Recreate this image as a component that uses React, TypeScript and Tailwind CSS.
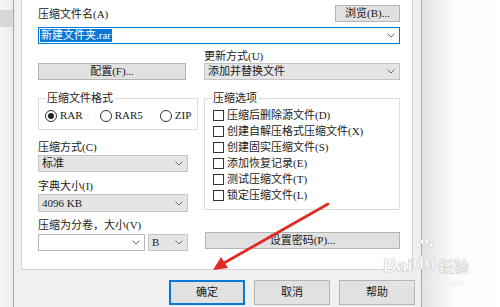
import React from "react";

const FONT = '"Liberation Serif", "Noto Sans CJK SC", serif';

function Chevron() {
  return (
    <svg width="8" height="5" viewBox="0 0 8 5" className="shrink-0">
      <polyline points="0.5,0.5 4,4 7.5,0.5" fill="none" stroke="#6a6a6a" strokeWidth="1" />
    </svg>
  );
}

function Combo({ text, className = "" }: { text: string; className?: string }) {
  return (
    <div
      className={`h-[17px] flex items-center justify-between bg-[#e5e5e5] border border-[#c4c4c4] pl-[3px] pr-[4px] text-[11px] leading-[13px] text-[#1a1a1a] ${className}`}
    >
      <span>{text}</span>
      <Chevron />
    </div>
  );
}

function Btn({ text, className = "" }: { text: string; className?: string }) {
  return (
    <div
      className={`h-[17px] flex items-center justify-center bg-[#e1e1e1] border border-[#b4b4b4] text-[11px] leading-[13px] text-[#1a1a1a] ${className}`}
    >
      {text}
    </div>
  );
}

function Radio({ label, checked }: { label: string; checked?: boolean }) {
  return (
    <div className="flex items-center gap-[3px]">
      <div className="w-[12px] h-[12px] rounded-full border border-[#333] bg-white flex items-center justify-center">
        {checked && <div className="w-[6px] h-[6px] rounded-full bg-[#222]" />}
      </div>
      <span>{label}</span>
    </div>
  );
}

function Check({ label }: { label: string }) {
  return (
    <div className="h-[16px] flex items-center gap-[3px]">
      <div className="w-[11px] h-[11px] border border-[#333] bg-white" />
      <span>{label}</span>
    </div>
  );
}

export default function App() {
  return (
    <div
      className="w-[500px] h-[307px] flex overflow-hidden relative bg-white text-[#1a1a1a]"
      style={{ fontFamily: FONT }}
    >
      {/* left strip */}
      <div className="w-[13px] flex flex-col bg-linear-to-r from-[#f8f8f8] to-[#ececec]">
        <div className="h-[10px]" />
        <div className="h-[17px] bg-[#d8d8d8]" />
      </div>

      {/* window */}
      <div className="w-[409px] flex flex-col bg-[#f0f0f0] border-l border-r border-[#a6a6a6]">
        {/* white tab panel */}
        <div className="ml-[7px] w-[392px] h-[270px] bg-white border-l border-r border-b border-[#d4d4d4] pl-[16px] pr-[12px] pt-[5px] text-[11px] leading-[13px]">
          {/* row 1 */}
          <div className="h-[17px] flex items-end justify-between">
            <span className="pb-[1px]">压缩文件名(A)</span>
            <Btn text="浏览(B)..." className="w-[65px]" />
          </div>
          <div className="mt-[5px] h-[17px] flex items-center justify-between border border-[#0078d7] bg-white pl-[1px] pr-[4px]">
            <span className="bg-[#0a78d7] text-white px-[1px] h-[13px] flex items-center">新建文件夹.rar</span>
            <Chevron />
          </div>

          {/* row 2 */}
          <div className="mt-[6px] grid grid-cols-[150px_1fr] gap-x-[16px]">
            <div className="flex items-end">
              <Btn text="配置(F)..." className="w-[148px]" />
            </div>
            <div className="flex flex-col">
              <span className="h-[13px]">更新方式(U)</span>
              <Combo text="添加并替换文件" className="mt-[0px]" />
            </div>
          </div>

          {/* row 3 */}
          <div className="mt-[12px] grid grid-cols-[150px_1fr] gap-x-[16px]">
            {/* left column */}
            <div className="flex flex-col">
              <fieldset className="border border-[#dcdcdc] h-[38px] px-[6px]">
                <legend className="ml-[1px] px-[1px] leading-[13px]">压缩文件格式</legend>
                <div className="mt-[4px] flex items-center gap-[17px]">
                  <Radio label="RAR" checked />
                  <Radio label="RAR5" />
                  <Radio label="ZIP" />
                </div>
              </fieldset>
              <span className="mt-[11px] h-[13px]">压缩方式(C)</span>
              <Combo text="标准" className="mt-[1px]" />
              <span className="mt-[8px] h-[13px]">字典大小(I)</span>
              <Combo text="4096 KB" className="mt-[1px] h-[18px]" />
              <span className="mt-[7px] h-[13px]">压缩为分卷，大小(V)</span>
              <div className="mt-[2px] flex gap-[3px]">
                <div className="w-[107px] h-[17px] flex items-center justify-end border border-[#b8b8b8] bg-white pr-[4px]">
                  <Chevron />
                </div>
                <Combo text="B" className="flex-1" />
              </div>
            </div>

            {/* right column */}
            <div className="flex flex-col">
              <fieldset className="border border-[#dcdcdc] h-[118px] pl-[8px]">
                <legend className="ml-[-1px] px-[1px] leading-[13px]">压缩选项</legend>
                <div className="mt-[2px] flex flex-col">
                  <Check label="压缩后删除源文件(D)" />
                  <Check label="创建自解压格式压缩文件(X)" />
                  <Check label="创建固实压缩文件(S)" />
                  <Check label="添加恢复记录(E)" />
                  <Check label="测试压缩文件(T)" />
                  <Check label="锁定压缩文件(L)" />
                </div>
              </fieldset>
              <Btn text="设置密码(P)..." className="mt-[22px] ml-[1px]" />
            </div>
          </div>
        </div>

        {/* bottom buttons */}
        <div className="mt-[10px] flex justify-end gap-[9px] pr-[6px] text-[11px] leading-[13px]">
          <div className="w-[76px] h-[25px] flex items-center justify-center bg-[#e1e1e1] border-2 border-[#0a78d7]">确定</div>
          <div className="w-[76px] h-[25px] flex items-center justify-center bg-[#e1e1e1] border border-[#b4b4b4]">取消</div>
          <div className="w-[76px] h-[25px] flex items-center justify-center bg-[#e1e1e1] border border-[#b4b4b4]">帮助</div>
        </div>
      </div>

      {/* outside */}
      <div className="flex-1 bg-linear-to-r from-[#e2e2e2] via-[#fbfbfb] via-40% to-white" />

      {/* red arrow */}
      <svg className="absolute left-0 top-0 pointer-events-none" width="500" height="307">
        <line x1="328" y1="204" x2="224" y2="263" stroke="#e02a22" strokeWidth="2.6" strokeLinecap="round" />
        <polygon points="213,270 221,257 228,268" fill="#e02a22" />
      </svg>

      {/* watermark */}
      <div className="absolute left-[383px] top-[252px] pointer-events-none flex flex-col items-start">
        <div className="flex items-end" style={{ fontFamily: '"Liberation Sans", "Noto Sans CJK SC", sans-serif' }}>
          <span className="text-[19px] leading-[20px] font-bold text-white [-webkit-text-stroke:0.7px_#cfcfcf]">Bai</span>
          <div className="relative">
            <svg className="absolute left-[2px] top-[-13px]" width="18" height="14" viewBox="0 0 18 14">
              <ellipse cx="3" cy="6" rx="2" ry="2.5" fill="white" stroke="#cfcfcf" strokeWidth="0.7" />
              <ellipse cx="7" cy="2.5" rx="2" ry="2.3" fill="white" stroke="#cfcfcf" strokeWidth="0.7" />
              <ellipse cx="12" cy="2.5" rx="2" ry="2.3" fill="white" stroke="#cfcfcf" strokeWidth="0.7" />
              <ellipse cx="16" cy="6" rx="1.8" ry="2.3" fill="white" stroke="#cfcfcf" strokeWidth="0.7" />
            </svg>
            <span className="text-[19px] leading-[20px] font-bold text-white [-webkit-text-stroke:0.7px_#cfcfcf]">du</span>
          </div>
          <span className="ml-[3px] text-[15px] leading-[18px] font-bold text-white [-webkit-text-stroke:0.6px_#cfcfcf]">经验</span>
        </div>
        <span className="mt-[2px] ml-[8px] text-[9px] leading-[10px] text-[#ececec]" style={{ fontFamily: '"Liberation Sans", sans-serif' }}>
          jingyan.baidu.com
        </span>
      </div>
    </div>
  );
}
